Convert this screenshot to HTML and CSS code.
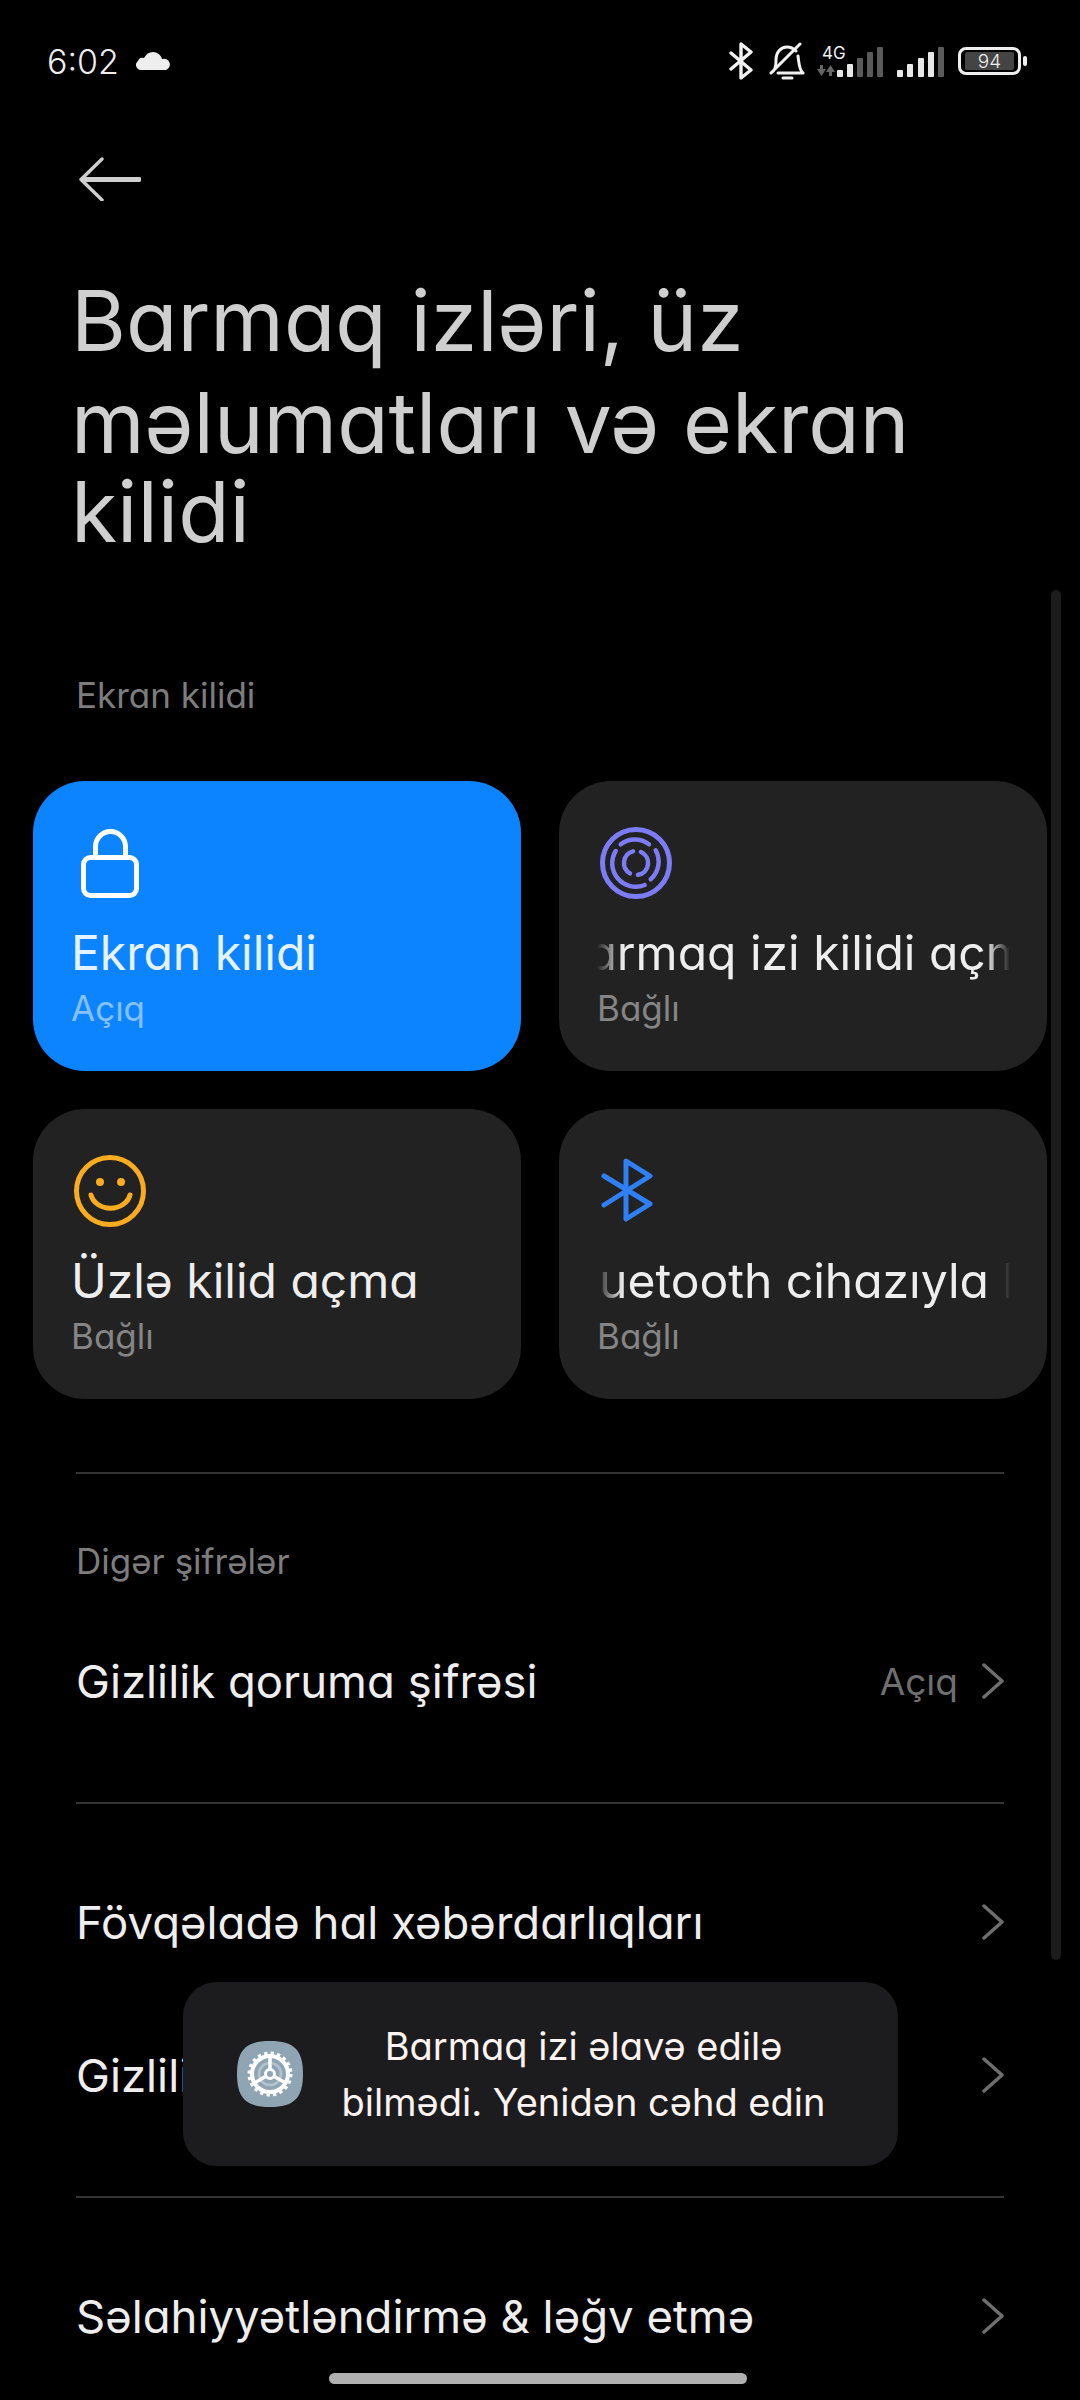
FILE: index.html
```html
<!DOCTYPE html>
<html lang="az">
<head>
<meta charset="utf-8">
<title>Barmaq izləri</title>
<link rel="stylesheet" href="styles.css">
</head>
<body>
<div class="screen">
  <header class="status">
    <div class="status-left">
      <span class="clock">6:02</span>
      <svg class="cloud" viewBox="0 0 34 18"><path d="M5 18a5 5 0 0 1-3-9 5 5 0 0 1 6-3C10 2 13 0 17 0s8 3 9 7a5.500 5.500 0 0 1 4 11z" fill="#eee"/></svg>
    </div>
    <div class="status-right">
      <svg class="st-bt" viewBox="0 0 24 38"><path d="M2 11l20 17-10 8V2l10 8L2 27" fill="none" stroke="#f2f2f2" stroke-width="3.400" stroke-linecap="round" stroke-linejoin="round"/></svg>
      <svg class="st-bell" viewBox="0 0 36 38"><path d="M2 31c3-2 5-4 5-13 0-8 5-13 11-13 4 0 7 2 9 4M29 14c1 7 1 14 5 17H9M14 36h9M2 31L31 2" fill="none" stroke="#f2f2f2" stroke-width="3" stroke-linecap="round" stroke-linejoin="round"/></svg>
      <div class="sim">
        <span class="net">4G</span>
        <svg class="sim-bars" viewBox="0 0 68 40"><path d="M0 28h3v-4h3v4h3l-4.500 7zM9 31h3v4h3v-4h3l-4.500-7z" fill="#666"/><g fill="#e8e8e8"><rect x="20" y="29" width="6" height="7" rx="1"/><rect x="30" y="23" width="6" height="13" rx="1"/></g><g fill="#5a5a5a"><rect x="40" y="17" width="6" height="19" rx="1"/><rect x="50" y="11" width="6" height="25" rx="1"/><rect x="60" y="6" width="6" height="30" rx="1"/></g></svg>
      </div>
      <svg class="sim-2" viewBox="0 0 48 40"><g fill="#e8e8e8"><rect x="0" y="29" width="6" height="7" rx="1"/><rect x="10" y="23" width="6" height="13" rx="1"/><rect x="21" y="17" width="6" height="19" rx="1"/><rect x="31" y="11" width="6" height="25" rx="1"/></g><rect x="41" y="6" width="6" height="30" rx="1" fill="#5a5a5a"/></svg>
      <div class="battery"><div class="batt-body"><span class="batt-fill">94</span></div><span class="batt-cap"></span></div>
    </div>
  </header>

  <svg class="back" viewBox="0 0 62 44"><path d="M23 2L2 22.500 23 43" fill="none" stroke="#cfcfcf" stroke-width="3.400" stroke-linecap="round" stroke-linejoin="round"/><path d="M4 22.500h56" fill="none" stroke="#cfcfcf" stroke-width="5" stroke-linecap="round"/></svg>

  <h1 class="title"><span class="tl tl-1">Barmaq izləri, üz</span><span class="tl tl-2">məlumatları və ekran</span><span class="tl tl-3">kilidi</span></h1>

  <div class="scrollbar"></div>

  <h2 class="section first">Ekran kilidi</h2>

  <div class="cards">
    <div class="card on">
      <svg class="ic" viewBox="0 0 72 72"><path d="M21.500 30V19.500a15 15 0 0 1 30 0V30" fill="none" stroke="#fff" stroke-width="5"/><rect x="9.500" y="30.500" width="53" height="38" rx="7" fill="none" stroke="#fff" stroke-width="5"/></svg>
      <div class="c-title">Ekran kilidi</div>
      <div class="c-sub">Açıq</div>
    </div>
    <div class="card">
      <svg class="ic" viewBox="0 0 72 72" fill="none" stroke="#7c7cf6" stroke-linecap="round" stroke-width="4.500"><circle cx="36" cy="36" r="33.500" stroke-width="5"/><path d="M20.700 17.300A23.500 23.500 0 0 1 49 17.300M55.700 23.300A23.500 23.500 0 0 1 50.700 52.300M44.700 58A23.500 23.500 0 0 1 15.700 24"/><path d="M33 24.400A12 12 0 0 0 30 46.400M38 47.800A12 12 0 0 0 41 25"/></svg>
      <div class="c-title marquee"><span class="m-a">Barmaq izi kilidi açma</span></div>
      <div class="c-sub">Bağlı</div>
    </div>
    <div class="card">
      <svg class="ic" viewBox="0 0 72 72" fill="none" stroke="#f9ac1f" stroke-linecap="round"><circle cx="36" cy="36" r="33.500" stroke-width="5"/><path d="M17 40A20 17 0 0 0 56 40" stroke-width="5"/><circle cx="26" cy="27" r="4" fill="#f9ac1f" stroke="none"/><circle cx="47" cy="27" r="4" fill="#f9ac1f" stroke="none"/></svg>
      <div class="c-title">Üzlə kilid açma</div>
      <div class="c-sub">Bağlı</div>
    </div>
    <div class="card">
      <svg class="ic" viewBox="0 0 72 72" fill="none" stroke="#2f80f5" stroke-width="5" stroke-linecap="round" stroke-linejoin="round"><path d="M4 21l46 28-24 15V6l24 15L4 50"/></svg>
      <div class="c-title marquee"><span class="m-a">Bluetooth cihazıyla kilid açma</span></div>
      <div class="c-sub">Bağlı</div>
    </div>
  </div>

  <div class="rule rule-a"></div>
  <h2 class="section second">Digər şifrələr</h2>
  <div class="row row-1"><span class="r-text">Gizlilik qoruma şifrəsi</span><span class="r-val">Açıq</span><svg class="chev" viewBox="0 0 22 36"><path d="M2 2l18 16L2 34" fill="none" stroke="#6e6e6e" stroke-width="3.500" stroke-linecap="round" stroke-linejoin="round"/></svg></div>
  <div class="rule rule-b"></div>
  <div class="row row-2"><span class="r-text">Fövqəladə hal xəbərdarlıqları</span><svg class="chev" viewBox="0 0 22 36"><path d="M2 2l18 16L2 34" fill="none" stroke="#6e6e6e" stroke-width="3.500" stroke-linecap="round" stroke-linejoin="round"/></svg></div>
  <div class="row row-3"><span class="r-text">Gizlilik</span><svg class="chev" viewBox="0 0 22 36"><path d="M2 2l18 16L2 34" fill="none" stroke="#6e6e6e" stroke-width="3.500" stroke-linecap="round" stroke-linejoin="round"/></svg></div>
  <div class="rule rule-c"></div>
  <div class="row row-4"><span class="r-text">Səlahiyyətləndirmə &amp; ləğv etmə</span><svg class="chev" viewBox="0 0 22 36"><path d="M2 2l18 16L2 34" fill="none" stroke="#6e6e6e" stroke-width="3.500" stroke-linecap="round" stroke-linejoin="round"/></svg></div>

  <div class="toast">
    <svg class="t-ic" viewBox="0 0 66 66"><path d="M33 0c24 0 33 9 33 33s-9 33-33 33S0 57 0 33 9 0 33 0z" fill="#8fa5b4"/><circle cx="33" cy="33" r="11" fill="none" stroke="#b3c3cd" stroke-width="2.500"/><circle cx="33" cy="33" r="18" fill="none" stroke="#fff" stroke-width="4"/><circle cx="33" cy="33" r="20.500" fill="none" stroke="#fff" stroke-width="4" stroke-dasharray="3.200 3.240"/><path d="M33 15v13M17.500 42l11-6.500M48.500 42l-11-6.500" stroke="#fff" stroke-width="3.500"/><circle cx="33" cy="33" r="4.500" fill="none" stroke="#fff" stroke-width="3"/></svg>
    <p class="t-text">Barmaq izi əlavə edilə<br>bilmədi. Yenidən cəhd edin</p>
  </div>

  <div class="home"></div>
</div>
</body>
</html>
```
FILE: styles.css
```css
* { box-sizing: border-box; }
html, body { margin: 0; padding: 0; background: #000; }
body { font-family: "Inter", "Lato", sans-serif; font-feature-settings: "cv11" 1; color: #e8e8e8; }
.screen { position: relative; width: 1080px; height: 2400px; overflow: hidden; background: #000; }

.status { display: flex; justify-content: space-between; align-items: center; height: 40px; padding: 0 53px 0 47px; position: absolute; left: 0; right: 0; top: 41px; }
.status-left { display: flex; align-items: center; gap: 17px; }
.clock { font-size: 34px; font-weight: 300; color: #eee; }
.cloud { width: 34px; height: 18px; }
.status-right { display: flex; align-items: center; }
.st-bt { width: 24px; height: 38px; margin-right: 16px; }
.st-bell { width: 36px; height: 38px; margin-right: 12px; }
.sim { position: relative; width: 68px; height: 40px; margin-right: 12px; }
.net { position: absolute; left: 5px; top: 2px; font-size: 17px; line-height: 20px; color: #eee; }
.sim-bars { position: absolute; left: 0; top: 0; width: 68px; height: 40px; }
.sim-2 { width: 48px; height: 40px; margin-right: 13px; }
.battery { display: flex; align-items: center; gap: 2px; }
.batt-body { width: 63px; height: 28px; border: 3px solid #eee; border-radius: 8px; padding: 2px 4px; display: flex; }
.batt-fill { flex: 1; background: #444; border-radius: 2px; color: #eee; font-size: 19px; font-weight: 300; line-height: 20px; text-align: center; }
.batt-cap { width: 4px; height: 10px; background: #eee; border-radius: 2px; }

.back { position: absolute; left: 79px; top: 157px; width: 62px; height: 44px; }
.title { position: absolute; left: 71px; top: 264px; margin: 0; font-weight: 400; font-size: 84px; color: #cfcfcf; white-space: nowrap; }
.tl { display: block; }
.tl-1 { line-height: 114px; }
.tl-2 { line-height: 90px; }
.tl-3 { line-height: 88px; }
.scrollbar { position: absolute; left: 1051px; top: 590px; width: 10px; height: 1370px; background: #1c1c1c; border-radius: 5px; }

.section { position: absolute; left: 76px; margin: 0; font-weight: 400; font-size: 35px; color: #7d7d7d; line-height: 44px; }
.section.first { top: 673px; }
.section.second { top: 1539px; }

.cards { position: absolute; left: 33px; top: 781px; display: grid; grid-template-columns: 488px 488px; grid-auto-rows: 290px; gap: 38px; }
.card { background: #222; border-radius: 52px; padding: 46px 40px 0 41px; overflow: hidden; }
.card.on { background: #0d84ff; }
.ic { display: block; width: 72px; height: 72px; overflow: visible; }
.c-title { margin: 26px 0 0 -3px; font-size: 48px; font-weight: 400; line-height: 56px; color: #eee; white-space: nowrap; }
.c-sub { margin: 5px 0 0 -3px; font-size: 35px; font-weight: 400; line-height: 44px; color: #858585; }
.on .c-title { color: #e6f3ff; }
.on .c-sub { color: #86c1ff; }
.marquee { width: 413px; overflow: hidden; -webkit-mask-image: linear-gradient(90deg, transparent 0, #000 26px, #000 389px, transparent 413px); mask-image: linear-gradient(90deg, transparent 0, #000 26px, #000 389px, transparent 413px); }
.m-a { display: inline-block; margin-left: -41px; }

.rule { position: absolute; left: 76px; width: 928px; height: 2px; background: #333; }
.rule-a { top: 1472px; }
.rule-b { top: 1802px; }
.rule-c { top: 2196px; }

.row { position: absolute; left: 76px; width: 928px; display: flex; align-items: center; height: 60px; }
.row-1 { top: 1651px; }
.row-2 { top: 1892px; }
.row-3 { top: 2045px; }
.row-4 { top: 2286px; }
.r-text { font-size: 45.500px; font-weight: 400; color: #eee; flex: 1; white-space: nowrap; }
.r-val { font-size: 37px; font-weight: 400; color: #6f6f6f; margin-right: 24px; }
.chev { width: 22px; height: 36px; }

.toast { position: absolute; left: 183px; top: 1982px; width: 715px; height: 184px; background: #1c1c1e; border-radius: 34px; display: flex; align-items: center; padding: 0 34px 0 54px; }
.t-ic { width: 66px; height: 66px; flex: none; }
.t-text { flex: 1; margin: 0; text-align: center; font-size: 38px; font-weight: 400; line-height: 56px; color: #fdf3f1; }

.home { position: absolute; left: 329px; top: 2373px; width: 418px; height: 11px; border-radius: 6px; background: #b0b0b0; }
```
